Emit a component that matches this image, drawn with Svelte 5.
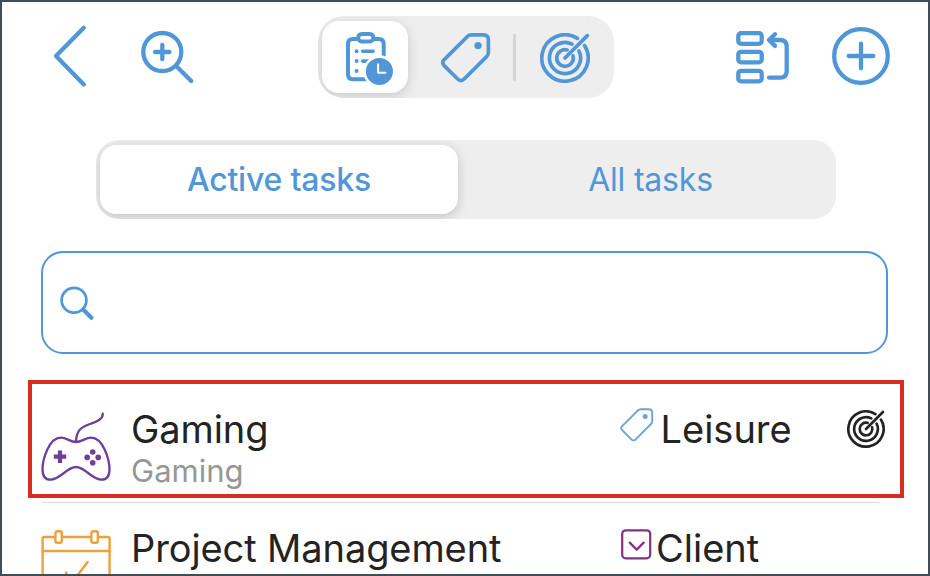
<script lang="ts">
  type Filter = 'active' | 'all';

  let filter: Filter = $state('active');
  let query = $state('');

  const RINGS = [
    { r: 23.2, gap: 5.1 },
    { r: 15.6, gap: 4.9 },
    { r: 8.3, gap: 4.2 },
  ];

  // Circle around (25, 25), left open where the arrow passes at 45 degrees.
  function ringPath(r: number, gap: number): string {
    const open = Math.asin(gap / r);
    const from = -Math.PI / 4 + open;
    const to = -Math.PI / 4 - open;
    const point = (a: number) => `${(25 + r * Math.cos(a)).toFixed(2)} ${(25 + r * Math.sin(a)).toFixed(2)}`;
    return `M${point(from)} A${r} ${r} 0 1 1 ${point(to)}`;
  }
</script>

{#snippet tagIcon(cls: string)}
  <svg class={['icon', cls]} viewBox="0 0 50 50" aria-hidden="true">
    <path
      d="M30.5 1.9H42.2Q47.4 1.9 47.4 7V19.4Q47.4 21.8 45.6 23.6L23.4 45.8Q19.9 49.4 16.4 45.8L3.2 32.6Q.4 29.6 3.2 26.6L26.2 3.7Q28 1.9 30.5 1.9Z"
    />
    <circle class="solid" cx="37" cy="12.6" r="3.7" />
  </svg>
{/snippet}

{#snippet targetIcon(cls: string)}
  <svg class={['icon', cls]} viewBox="0 0 50 50" aria-hidden="true">
    {#each RINGS as ring (ring.r)}
      <path d={ringPath(ring.r, ring.gap)} />
    {/each}
    <path d="M25 25L47.3 2.6" />
  </svg>
{/snippet}

<main class="screen">
  <header class="toolbar">
    <button class="back" aria-label="Back">
      <svg class="icon" width="36" height="64" viewBox="0 0 36 64">
        <path d="M31.8 3.8L4 32.1L31.8 60.4" />
      </svg>
    </button>
    <button class="zoom" aria-label="Zoom in">
      <svg class="icon" width="54" height="54" viewBox="0 0 54 54">
        <circle cx="22.3" cy="22" r="19" />
        <path d="M36.2 36L51.2 51M15.1 22H29.5M22.3 14.8V29.2" />
      </svg>
    </button>

    <div class="views">
      <button class="view view--selected" aria-label="Tasks">
        <svg class="icon clipboard" width="60" height="60" viewBox="0 0 60 60">
          <path d="M14 10.9H11Q6 10.9 6 15.9V46.3Q6 51.3 11 51.3H36.7Q41.7 51.3 41.7 46.3V15.9Q41.7 10.9 36.7 10.9H33" />
          <rect x="16.2" y="5.9" width="15.2" height="7.6" rx="3.6" />
          <path class="lines" d="M20.6 23.2H31.1M20.6 33.1H28" />
          <circle class="solid" cx="14.6" cy="23.2" r="2" />
          <circle class="solid" cx="14.6" cy="33.1" r="2" />
          <circle class="solid" cx="14.6" cy="42.9" r="2" />
          <circle class="clock" cx="37.4" cy="43.4" r="14.8" />
          <path class="hands" d="M36.1 36.2V44.7H43.4" />
        </svg>
      </button>
      <button class="view" aria-label="Tags">{@render tagIcon('tag')}</button>
      <span class="split"></span>
      <button class="view" aria-label="Goals">{@render targetIcon('target')}</button>
    </div>

    <button class="reorder" aria-label="Reorder">
      <svg class="icon" width="54" height="54" viewBox="0 0 54 54">
        <rect x="2.3" y="3.2" width="23.4" height="10.6" rx="2.8" />
        <rect x="2.3" y="21.8" width="23.4" height="10.6" rx="2.8" />
        <rect x="2.3" y="40.8" width="23.4" height="10.6" rx="2.8" />
        <path d="M33 47.6H44Q50.7 47.6 50.7 41V16.6Q50.7 10 44 10H33M39 4.3L33 10L39 15.9" />
      </svg>
    </button>
    <button class="add" aria-label="Add task">
      <svg class="icon" width="58" height="58" viewBox="0 0 58 58">
        <circle cx="29" cy="29" r="26.8" />
        <path d="M16.7 29H41.3M29 16.7V41.3" />
      </svg>
    </button>
  </header>

  <div class="tabs" role="tablist">
    <button
      class="tab"
      class:tab--selected={filter === 'active'}
      role="tab"
      aria-selected={filter === 'active'}
      onclick={() => (filter = 'active')}>Active tasks</button
    >
    <button
      class="tab"
      class:tab--selected={filter === 'all'}
      role="tab"
      aria-selected={filter === 'all'}
      onclick={() => (filter = 'all')}>All tasks</button
    >
  </div>

  <label class="search">
    <svg class="icon" width="36" height="36" viewBox="0 0 36 36" aria-hidden="true">
      <circle cx="15" cy="15.3" r="12.4" />
      <path d="M24.2 24.6L32.4 32.8" />
    </svg>
    <input type="text" aria-label="Search" bind:value={query} />
  </label>

  <section class="list">
    <article class="task task--highlighted">
      <svg class="icon gamepad" width="70" height="70" viewBox="0 0 70 70" aria-hidden="true">
        <path
          d="M35 30C29 30 26 25.7 20 25.7C8 25.7 1.5 47 1.5 57.5C1.5 65 5 67.7 9.5 67.7C19 67.7 26 55 35 55C44 55 51 67.7 60.5 67.7C65 67.7 68.5 65 68.5 57.5C68.5 47 62 25.7 50 25.7C44 25.7 41 30 35 30C35 18 41 14.8 49 12C57 9.2 61.8 7 61.8 1.7"
        />
        <path class="dpad" d="M12.8 44.7H25.2M19 38.5V50.9" />
        <circle class="solid" cx="51.7" cy="40" r="2.8" />
        <circle class="solid" cx="46.2" cy="45.4" r="2.8" />
        <circle class="solid" cx="57.2" cy="45.4" r="2.8" />
        <circle class="solid" cx="51.7" cy="50.8" r="2.8" />
      </svg>
      <div class="text">
        <span class="name">Gaming</span>
        <span class="note">Gaming</span>
      </div>
      <div class="category">
        {@render tagIcon('tag-small')}
        <span>Leisure</span>
      </div>
      {@render targetIcon('target-small')}
    </article>

    <hr />

    <article class="task">
      <svg class="icon calendar" width="70" height="70" viewBox="0 0 70 70" aria-hidden="true">
        <rect x="1.6" y="8" width="67" height="60" rx="1.5" />
        <path d="M1.6 22H68.6M25 43.5L30 55L46.6 33" />
        <rect class="ring" x="14.4" y="2.2" width="6.4" height="11.6" rx="2" />
        <rect class="ring" x="50.4" y="2.2" width="6.4" height="11.6" rx="2" />
      </svg>
      <div class="text">
        <span class="name">Project Management</span>
      </div>
      <div class="category">
        <svg class="icon dropdown" width="32" height="32" viewBox="0 0 32 32" aria-hidden="true">
          <rect x="2.2" y="1.3" width="28" height="28" rx="3.6" />
          <path d="M9.7 13.6L16.7 20.6L23.7 13.6" />
        </svg>
        <span>Client</span>
      </div>
    </article>
  </section>
</main>

<style>
  :global(body) {
    margin: 0;
  }

  .screen {
    box-sizing: border-box;
    width: 930px;
    height: 576px;
    overflow: hidden;
    border: 2px solid #414c59;
    background: #fff;
    color: #232323;
    font-family: Inter, 'Liberation Sans', sans-serif;
  }

  button {
    display: block;
    padding: 0;
    border: 0;
    background: none;
    color: inherit;
    font: inherit;
  }

  .icon {
    display: block;
    flex-shrink: 0;
    fill: none;
    stroke: currentColor;
    stroke-width: 4.3;
    stroke-linecap: round;
    stroke-linejoin: round;
  }

  .solid {
    fill: currentColor;
    stroke: none;
  }

  .toolbar {
    display: flex;
    align-items: center;
    height: 82px;
    padding: 14px 38px 0 50px;
    color: #5197d8;
  }

  .back {
    margin-top: -2px;
  }

  .zoom {
    margin: -1px 123.5px 0 52px;
  }

  .views {
    display: flex;
    align-items: center;
    box-sizing: border-box;
    width: 296px;
    height: 82px;
    padding: 0 0 0 4.5px;
    border-radius: 26px;
    background: #eee;
    overflow: hidden;
  }

  .view {
    display: flex;
    align-items: center;
    justify-content: center;
    height: 71.5px;
    width: 98px;
  }

  .view--selected {
    width: 86.5px;
    margin-right: 7.5px;
    border-radius: 17px;
    background: #fff;
    box-shadow: 0 3px 12px rgba(0, 0, 0, 0.16);
  }

  .clipboard {
    margin: 1px 0 0 14px;
    stroke-width: 4;
  }

  .clipboard .lines {
    stroke-width: 3.6;
  }

  .clipboard .clock {
    fill: currentColor;
    stroke: #fff;
    stroke-width: 2.6;
  }

  .clipboard .hands {
    stroke: #fff;
    stroke-width: 2;
  }

  .tag,
  .target {
    width: 50px;
    height: 50px;
    margin-top: 2px;
    stroke-width: 3.7;
  }

  .tag {
    margin-left: 2px;
  }

  .split {
    width: 2.5px;
    height: 47px;
    flex-shrink: 0;
    border-radius: 1px;
    background: #d5d5d9;
  }

  .reorder {
    margin: -1px 0 0 122.5px;
  }

  .add {
    margin-left: auto;
    margin-top: -2px;
  }

  .tabs {
    display: flex;
    box-sizing: border-box;
    width: 740px;
    height: 79px;
    margin: 42px 0 0 93.5px;
    padding: 5px 4.5px;
    border-radius: 23px;
    background: #eee;
    overflow: hidden;
  }

  .tab {
    flex: 1;
    padding-left: 12px;
    border-radius: 16px;
    color: #5197d8;
    font-size: 32px;
    letter-spacing: -0.2px;
  }

  .tab--selected {
    flex: 0 0 358px;
    box-sizing: border-box;
    padding-left: 0;
    background: #fff;
    box-shadow: 0 3px 12px rgba(0, 0, 0, 0.18);
    font-weight: 500;
  }

  .search {
    display: flex;
    align-items: center;
    box-sizing: border-box;
    width: 847px;
    height: 103px;
    margin: 32.4px 0 0 39.4px;
    padding-left: 15.5px;
    border: 2.4px solid #5197d8;
    border-radius: 22px;
    color: #5197d8;
  }

  .search circle {
    stroke-width: 2.7;
  }

  .search input {
    flex: 1;
    min-width: 0;
    margin: 0 16px 0 10px;
    border: 0;
    outline: 0;
    background: none;
    font: inherit;
    font-size: 32px;
  }

  .list {
    margin-top: 25.6px;
  }

  .task {
    display: flex;
    align-items: flex-start;
    box-sizing: border-box;
    width: 876px;
    height: 118px;
    margin-left: 26px;
    padding: 26px 18px 0 13px;
  }

  .task--highlighted {
    padding: 22px 13px 0 9px;
    border: 4px solid #d82d21;
  }

  .text {
    display: flex;
    flex-direction: column;
    width: 489px;
    margin-left: 20px;
  }

  .name,
  .category {
    font-size: 38px;
    line-height: 46px;
    white-space: nowrap;
  }

  .name {
    letter-spacing: -0.1px;
  }

  .note {
    color: #979797;
    font-size: 31px;
    line-height: 38px;
  }

  .category {
    display: flex;
    align-items: flex-start;
    width: 227px;
  }

  .gamepad {
    margin-top: 6px;
    color: #6e3f98;
    stroke-width: 2.3;
  }

  .gamepad .dpad {
    stroke-width: 4.2;
    stroke-linecap: butt;
  }

  .tag-small {
    width: 34px;
    height: 34px;
    margin: 2.5px 6.5px 0 0;
    color: #6ba5d6;
    stroke-width: 2.8;
  }

  .target-small {
    width: 38px;
    height: 38px;
    margin: 4px 0 0;
    stroke-width: 3.5;
  }

  hr {
    width: 837px;
    height: 1px;
    margin: 4px 0 -4px 39.5px;
    border: 0;
    background: #d6d9d8;
  }

  .calendar {
    margin-top: 4px;
    color: #ee9f3e;
    stroke-width: 2.4;
  }

  .calendar .ring {
    fill: #fff;
  }

  .dropdown {
    margin: 4px 4px 0 0;
    color: #872f7f;
    stroke-width: 2.2;
  }
</style>
